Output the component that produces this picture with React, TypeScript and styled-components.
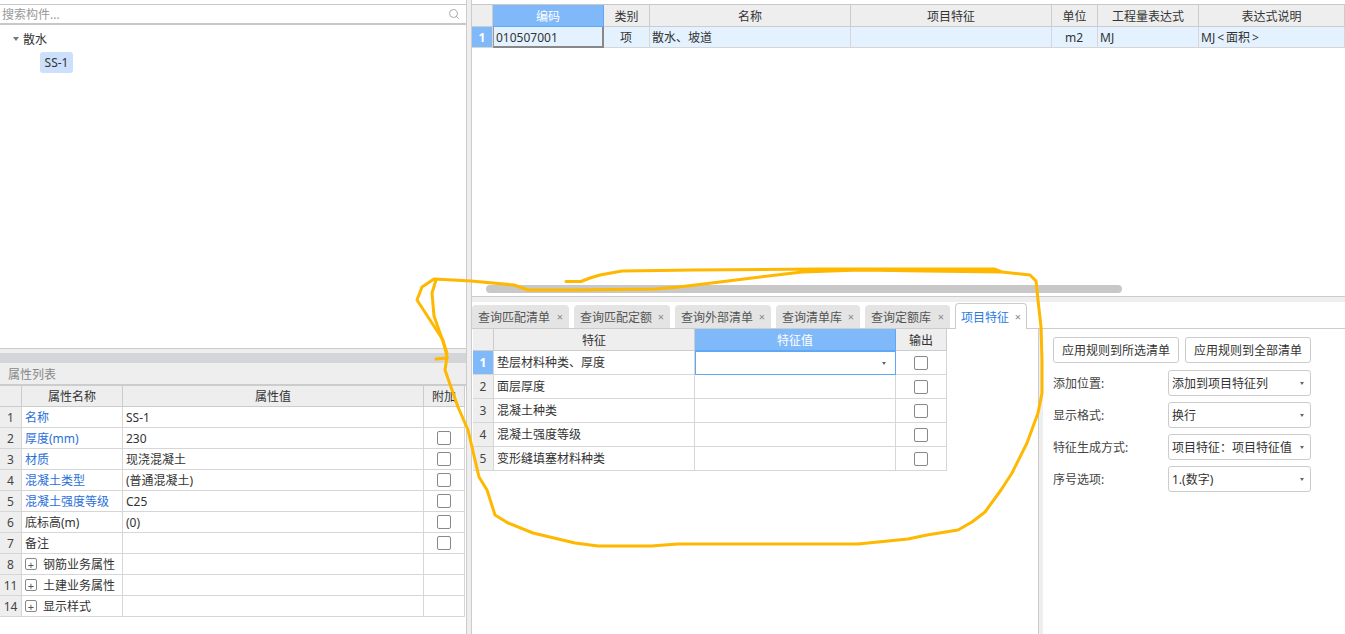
import styled, { createGlobalStyle } from "styled-components";
import { Search } from "lucide-react";

const GlobalStyle = createGlobalStyle`
  html, body { margin: 0; padding: 0; background: #fff; }
  * { box-sizing: border-box; }
  body { font-family: "Noto Sans", "Noto Sans CJK SC", sans-serif; font-size: 12px; color: #333; }
`;

const Page = styled.div`
  position: relative;
  display: flex;
  width: 1345px;
  height: 634px;
  overflow: hidden;
  background: #fff;
`;

/* left column */
const LeftPane = styled.div`
  display: flex;
  flex-direction: column;
  width: 467px;
  border-right: 1px solid #ccc;
  padding-top: 4px;
`;

const SearchBar = styled.div`
  display: flex;
  align-items: center;
  justify-content: space-between;
  height: 21px;
  padding: 0 6px 0 2px;
  border-top: 1px solid #c8c8c8;
  border-bottom: 2px solid #c8c8c8;
  color: #999;
  svg { color: #aaa; }
`;

const Tree = styled.div`
  height: 324px;
  border-bottom: 1px solid #ccc;
  padding-top: 3px;
`;

const TreeRow = styled.div`
  display: flex;
  align-items: center;
  height: 21px;
  padding-left: 13px;
  gap: 4px;
  color: #333;
`;

const TreeArrow = styled.span`
  width: 0;
  height: 0;
  margin-top: 1px;
  border-left: 3.5px solid transparent;
  border-right: 3.5px solid transparent;
  border-top: 4px solid #777;
`;

const TreeLeaf = styled.div`
  display: inline-flex;
  align-items: center;
  justify-content: center;
  width: 33px;
  height: 21px;
  margin: 3px 0 0 40px;
  border-radius: 3px;
  background: #cce0fb;
`;

const Splitter = styled.div`
  height: 14px;
  border-top: 4px solid #eee;
  background: #d3d5d9;
`;

const PanelTitle = styled.div`
  display: flex;
  align-items: center;
  height: 23px;
  padding-left: 8px;
  background: #eee;
  border-bottom: 2px solid #ccc;
  color: #888;
`;

const Row = styled.div<{ $cols: string; $h: number; $bg?: string }>`
  display: grid;
  grid-template-columns: ${(p) => p.$cols};
  height: ${(p) => p.$h}px;
  background: ${(p) => p.$bg || "transparent"};
`;

const BillRow = styled(Row)`
  > div:not(:first-child) { padding-left: 2px; }
`;

const Cell = styled.div<{ $center?: boolean; $color?: string }>`
  display: flex;
  align-items: center;
  justify-content: ${(p) => (p.$center ? "center" : "flex-start")};
  padding: 0 3px;
  min-width: 0;
  white-space: nowrap;
  overflow: hidden;
  border-right: 1px solid #d6d6d6;
  border-bottom: 1px solid #d6d6d6;
  color: ${(p) => p.$color || "#333"};
`;

const HeadCell = styled(Cell)<{ $active?: boolean }>`
  justify-content: center;
  background: ${(p) => (p.$active ? "#7fb9fa" : "#eee")};
  color: ${(p) => (p.$active ? "#fff" : "#333")};
  border-right: 1px solid ${(p) => (p.$active ? "#5fa8f5" : "#ccc")};
  border-bottom: 1px solid ${(p) => (p.$active ? "#5fa8f5" : "#ccc")};
`;

const IndexCell = styled(Cell)<{ $active?: boolean }>`
  justify-content: center;
  padding: 0;
  background: ${(p) => (p.$active ? "#7fb9fa" : "#eee")};
  color: ${(p) => (p.$active ? "#fff" : "#444")};
  font-weight: ${(p) => (p.$active ? 700 : 400)};
`;

const CurrentCell = styled(Cell)`
  background: #e3f2fe;
  padding-top: 1px;
  border-left: 1px solid #999;
  border-right: 2px solid #888;
  border-bottom: 2px solid #888;
`;

const FeatureCell = styled(Cell)`
  padding-bottom: 2px;
`;

const ValueCell = styled(Cell)`
  position: relative;
  border: 1px solid #5fa8f5;
  justify-content: flex-end;
  padding-right: 9px;
`;

const Check = styled.span`
  width: 14px;
  height: 14px;
  border: 1px solid #888;
  border-radius: 2px;
  background: #fff;
`;

const Expander = styled.span`
  display: inline-flex;
  align-items: center;
  justify-content: center;
  width: 12px;
  height: 12px;
  margin: 0 6px 0 0;
  border: 1px solid #888;
  border-radius: 2px;
  font-size: 11px;
  line-height: 1;
  color: #555;
`;

const Caret = styled.span`
  width: 0;
  height: 0;
  border-left: 2.5px solid transparent;
  border-right: 2.5px solid transparent;
  border-top: 3px solid #666;
`;

/* right column */
const Gutter = styled.div`
  width: 4px;
  background: #eee;
`;

const RightPane = styled.div`
  flex: 1;
  display: flex;
  flex-direction: column;
  min-width: 0;
  border-left: 1px solid #ccc;
`;

const BillArea = styled.div`
  position: relative;
  height: 297px;
  padding-top: 4px;
  border-bottom: 1px solid #ccc;
`;

const BillHead = styled(Row)`
  border-top: 1px solid #c8c8c8;
`;

const ScrollThumb = styled.div`
  position: absolute;
  left: 14px;
  top: 285px;
  width: 636px;
  height: 8px;
  border-radius: 4px;
  background: #c8c8c8;
`;

const Band = styled.div`
  height: 5px;
  background: #eee;
`;

const TabStrip = styled.div`
  display: flex;
  align-items: flex-end;
  gap: 5px;
  height: 27px;
  border-bottom: 1px solid #ccc;
`;

const Tab = styled.div<{ $active?: boolean; $w: number }>`
  display: flex;
  align-items: center;
  justify-content: space-between;
  width: ${(p) => p.$w}px;
  height: ${(p) => (p.$active ? 26 : 23)}px;
  margin-bottom: ${(p) => (p.$active ? -1 : 0)}px;
  padding: 0 ${(p) => (p.$active ? 5 : 6)}px;
  border-radius: 4px 4px 0 0;
  background: ${(p) => (p.$active ? "#fff" : "#e4e4e4")};
  border: ${(p) => (p.$active ? "1px solid #ccc" : "none")};
  border-bottom: none;
  color: ${(p) => (p.$active ? "#2a7ae2" : "#555")};
  span { color: #888; font-size: 11px; }
`;

const Lower = styled.div`
  flex: 1;
  display: flex;
  min-height: 0;
`;

const FeatureArea = styled.div`
  width: 567px;
  padding-left: 1px;
  border-right: 1px solid #ccc;
`;

const RuleArea = styled.div`
  flex: 1;
  display: flex;
  flex-direction: column;
  gap: 6px;
  margin-left: 1px;
  padding: 8px 0 0 9px;
`;

const ButtonRow = styled.div`
  display: flex;
  gap: 6px;
  margin-bottom: 1px;
`;

const RuleButton = styled.button`
  width: 126px;
  height: 26px;
  padding: 0;
  border: 1px solid #ccc;
  border-radius: 3px;
  background: #fff;
  font: inherit;
  color: #333;
`;

const RuleRow = styled.div`
  display: flex;
  align-items: center;
  justify-content: space-between;
  width: 258px;
  color: #444;
`;

const Select = styled.div`
  display: flex;
  align-items: center;
  justify-content: space-between;
  width: 143px;
  height: 26px;
  padding: 0 6px 0 3px;
  border: 1px solid #ccc;
  border-radius: 3px;
  color: #333;
  white-space: nowrap;
`;

const Scribble = styled.svg`
  position: absolute;
  left: 0;
  top: 0;
  pointer-events: none;
`;

const LEFT_COLS = "22px 101px 301px 41px";
const BILL_COLS = "21px 111px 46px 201px 201px 46px 101px 1fr";
const FEATURE_COLS = "21px 201px 201px 51px";

const props = [
  { no: "1", name: "名称", value: "SS-1", blue: true, check: false },
  { no: "2", name: "厚度(mm)", value: "230", blue: true, check: true },
  { no: "3", name: "材质", value: "现浇混凝土", blue: true, check: true },
  { no: "4", name: "混凝土类型", value: "(普通混凝土)", blue: true, check: true },
  { no: "5", name: "混凝土强度等级", value: "C25", blue: true, check: true },
  { no: "6", name: "底标高(m)", value: "(0)", blue: false, check: true },
  { no: "7", name: "备注", value: "", blue: false, check: true },
];
const groups = [
  { no: "8", name: "钢筋业务属性" },
  { no: "11", name: "土建业务属性" },
  { no: "14", name: "显示样式" },
];
const billHeads = ["类别", "名称", "项目特征", "单位", "工程量表达式", "表达式说明"];
const tabs = [
  { label: "查询匹配清单", w: 97 },
  { label: "查询匹配定额", w: 96 },
  { label: "查询外部清单", w: 96 },
  { label: "查询清单库", w: 84 },
  { label: "查询定额库", w: 85 },
];
const features = ["垫层材料种类、厚度", "面层厚度", "混凝土种类", "混凝土强度等级", "变形缝填塞材料种类"];
const rules = [
  { label: "添加位置:", value: "添加到项目特征列" },
  { label: "显示格式:", value: "换行" },
  { label: "特征生成方式:", value: "项目特征：项目特征值" },
  { label: "序号选项:", value: "1.(数字)" },
];

export default function App() {
  return (
    <Page>
      <GlobalStyle />
      <LeftPane>
        <SearchBar>
          搜索构件...
          <Search size={12} strokeWidth={2} />
        </SearchBar>
        <Tree>
          <TreeRow>
            <TreeArrow />
            散水
          </TreeRow>
          <TreeLeaf>SS-1</TreeLeaf>
        </Tree>
        <Splitter />
        <PanelTitle>属性列表</PanelTitle>
        <Row $cols={LEFT_COLS} $h={21}>
          <HeadCell />
          <HeadCell>属性名称</HeadCell>
          <HeadCell>属性值</HeadCell>
          <HeadCell>附加</HeadCell>
        </Row>
        {props.map((p) => (
          <Row key={p.no} $cols={LEFT_COLS} $h={21}>
            <IndexCell>{p.no}</IndexCell>
            <Cell $color={p.blue ? "#2a6fd8" : undefined}>{p.name}</Cell>
            <Cell>{p.value}</Cell>
            <Cell $center>{p.check && <Check />}</Cell>
          </Row>
        ))}
        {groups.map((g) => (
          <Row key={g.no} $cols={LEFT_COLS} $h={21}>
            <IndexCell>{g.no}</IndexCell>
            <Cell>
              <Expander>+</Expander>
              {g.name}
            </Cell>
            <Cell />
            <Cell />
          </Row>
        ))}
      </LeftPane>
      <Gutter />
      <RightPane>
        <BillArea>
          <BillHead $cols={BILL_COLS} $h={23}>
            <HeadCell />
            <HeadCell $active>编码</HeadCell>
            {billHeads.map((h) => (
              <HeadCell key={h}>{h}</HeadCell>
            ))}
          </BillHead>
          <BillRow $cols={BILL_COLS} $h={21} $bg="#e3f2fe">
            <IndexCell $active>1</IndexCell>
            <CurrentCell>010507001</CurrentCell>
            <Cell $center>项</Cell>
            <Cell>散水、坡道</Cell>
            <Cell />
            <Cell $center>m2</Cell>
            <Cell>MJ</Cell>
            <Cell>MJ{"\u2009<\u2009"}面积{"\u2009>"}</Cell>
          </BillRow>
          <ScrollThumb />
        </BillArea>
        <Band />
        <TabStrip>
          {tabs.map((t) => (
            <Tab key={t.label} $w={t.w}>
              {t.label}
              <span>×</span>
            </Tab>
          ))}
          <Tab $active $w={72}>
            项目特征
            <span>×</span>
          </Tab>
        </TabStrip>
        <Lower>
          <FeatureArea>
            <Row $cols={FEATURE_COLS} $h={22}>
              <HeadCell />
              <HeadCell>特征</HeadCell>
              <HeadCell $active>特征值</HeadCell>
              <HeadCell>输出</HeadCell>
            </Row>
            {features.map((f, i) => (
              <Row key={f} $cols={FEATURE_COLS} $h={24}>
                <IndexCell $active={i === 0}>{i + 1}</IndexCell>
                <FeatureCell>{f}</FeatureCell>
                {i === 0 ? (
                  <ValueCell>
                    <Caret />
                  </ValueCell>
                ) : (
                  <Cell />
                )}
                <Cell $center>
                  <Check />
                </Cell>
              </Row>
            ))}
          </FeatureArea>
          <Gutter />
          <RuleArea>
            <ButtonRow>
              <RuleButton>应用规则到所选清单</RuleButton>
              <RuleButton>应用规则到全部清单</RuleButton>
            </ButtonRow>
            {rules.map((r) => (
              <RuleRow key={r.label}>
                {r.label}
                <Select>
                  {r.value}
                  <Caret />
                </Select>
              </RuleRow>
            ))}
          </RuleArea>
        </Lower>
      </RightPane>
      <Scribble width="1345" height="634" viewBox="0 0 1345 634" fill="none" stroke="#ffb800" strokeWidth="3" strokeLinejoin="round" strokeLinecap="round">
        <path d="M566 281.5 L581 281.5 L590 278 L600 275 L622 271 L695 270 L818 269 L994 269 L1002 272 L1030 275 L1036 281 L1038 300 L1041 327 L1042 360 L1042 393 L1038 413 L1027 443 L1012 473 L1001 490 L985 512 L972 522 L958 530 L927 535 L908 539 L858 544 L678 544 L651 546 L598 546 L575 543 L533 533 L508 523 L495 515 L487 490 L479 477 L468 430 L458 407 L445 370 L447 357 L443 340 L430 320 L417 300 L422 287 L434 279 L471 281 L514 285 L528 290 L573 290 L655 289 L679 287 L736 280 L802 272 L860 270 L924 271 L1002 272" />
        <path d="M436 280 L432 293 L434 316 L440 333 L447 353 M436 359 L447 358" />
      </Scribble>
    </Page>
  );
}
